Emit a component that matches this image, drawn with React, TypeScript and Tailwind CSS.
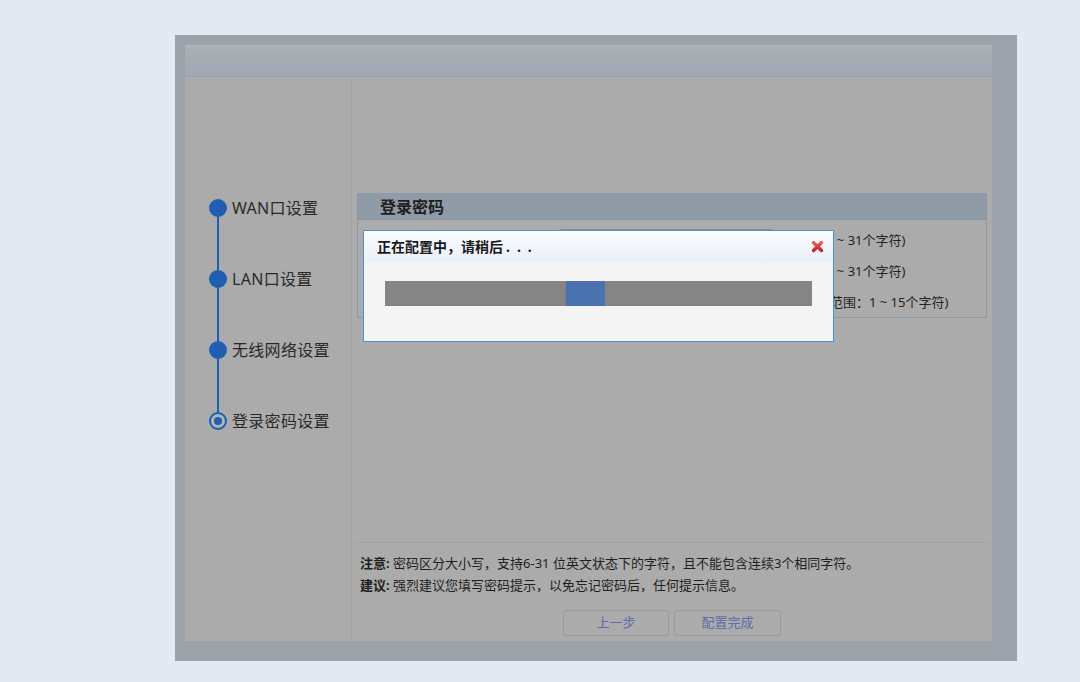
import React from "react";

const steps = ["WAN口设置", "LAN口设置", "无线网络设置", "登录密码设置"];

function CloseIcon() {
  return (
    <svg width="13" height="13" viewBox="0 0 13 13">
      <defs>
        <linearGradient id="rx" x1="0" y1="0" x2="0" y2="1">
          <stop offset="0" stopColor="#f0605a" />
          <stop offset="1" stopColor="#c8201c" />
        </linearGradient>
      </defs>
      <path d="M2.5 2.5 L10.5 10.5 M10.5 2.5 L2.5 10.5" stroke="url(#rx)" strokeWidth="3.4" strokeLinecap="round" />
    </svg>
  );
}

export default function App() {
  return (
    <div className="w-[1080px] h-[682px] bg-[#e3e9f3] pt-[35px] pl-[175px] font-['Noto_Sans','Noto_Sans_CJK_SC',sans-serif] text-[#262626]">
      <div className="w-[842px] h-[626px] bg-[#9ba2aa] pt-[10px] pl-[10px] pr-[25px] pb-[20px]">
        <div className="w-full h-full flex flex-col bg-[#ababab]">
          <div className="h-[32px] shrink-0 bg-gradient-to-b from-[#acb0b6] to-[#9fa8b3] border-t border-[#b4b8bd] border-b border-b-[#96a0ac]" />
          <div className="flex flex-1 min-h-0">
            <div className="w-[167px] shrink-0 border-r border-[#a1a4a8] relative pt-[119px]">
              <div className="absolute left-[32px] top-[131px] h-[213px] w-[2px] bg-[#1e5eb3]" />
              <div className="flex flex-col gap-[47px]">
                {steps.map((s, i) => (
                  <div key={s} className="relative h-[24px] flex items-center pl-[24px]">
                    {i < 3 ? (
                      <div className="w-[18px] h-[18px] rounded-full bg-[#1e5eb3] shrink-0" />
                    ) : (
                      <div className="w-[18px] h-[18px] rounded-full border-2 border-[#1e5eb3] bg-[#b3b3b3] shrink-0 flex items-center justify-center">
                        <div className="w-[8px] h-[8px] rounded-full bg-[#1e5eb3]" />
                      </div>
                    )}
                    <span className="ml-[5px] text-[16px] tracking-[0.3px] leading-[24px] text-[#2a2a2a]">{s}</span>
                  </div>
                ))}
              </div>
            </div>
            <div className="flex-1 flex flex-col relative">
              <div className="h-[116px] shrink-0" />
              <div className="mx-[5px] h-[125px] shrink-0 border border-[#8b99a8] flex flex-col">
                <div className="h-[26px] shrink-0 bg-[#8f9ba7] border-b border-[#8595a5] flex items-center pl-[22px]">
                  <span className="text-[16px] font-bold leading-[20px] text-[#1f1f1f]">登录密码</span>
                </div>
                <div className="flex flex-col pt-[4px]">
                  {["(长度为6\u2002~ 31个字符)", "(长度为6\u2002~ 31个字符)", "(提示信息范围：1 ~ 15个字符)"].map((t, i) => (
                    <div key={i} className="h-[31px] flex items-center">
                      <div className="w-[201px] shrink-0" />
                      <div className={`w-[215px] h-[22px] shrink-0 ${i === 0 ? "border border-[#8d8d8d] bg-[#b1b1b1] rounded-[2px]" : ""}`} />
                      <span className={`${i === 2 ? "ml-[0px]" : "ml-[6px]"} text-[13px] leading-[18px] text-[#232323] whitespace-nowrap`}>{t}</span>
                    </div>
                  ))}
                </div>
              </div>
              <div className="flex-1" />
              <div className="mx-[3px] border-t border-[#9aa3ae] pt-[9px] pb-[5px] flex flex-col">
                <div className="pl-[5px] text-[13px] leading-[22px] text-[#1f1f1f]">
                  <div><span className="font-bold">注意:</span> 密码区分大小写，支持6-31 位英文状态下的字符，且不能包含连续3个相同字符。</div>
                  <div><span className="font-bold">建议:</span> 强烈建议您填写密码提示，以免忘记密码后，任何提示信息。</div>
                </div>
                <div className="mt-[14px] flex justify-center gap-[5px]">
                  <div className="w-[106px] h-[26px] rounded-[3px] border border-[#9a9a9a] bg-[#ababab] flex items-center justify-center text-[13px] text-[#5b6ea6]">上一步</div>
                  <div className="w-[107px] h-[26px] rounded-[3px] border border-[#9a9a9a] bg-[#ababab] flex items-center justify-center text-[13px] text-[#5b6ea6]">配置完成</div>
                </div>
              </div>

              <div className="absolute left-[11px] top-[153px] w-[471px] h-[112px] border border-[#4b8fd5] bg-[#f4f4f4] flex flex-col">
                <div className="h-[31px] shrink-0 bg-gradient-to-b from-[#fbfcfe] to-[#e9f0f9] flex items-center justify-between pl-[13px] pr-[9px]">
                  <span className="text-[14px] font-bold leading-[18px] text-[#1a1a1a]">
                    正在配置中，请稍后<span className="tracking-[7px] ml-[3px]">...</span>
                  </span>
                  <CloseIcon />
                </div>
                <div className="pt-[19px] pl-[21px]">
                  <div className="relative w-[427px] h-[25px] bg-[#858585]">
                    <div className="absolute left-[181px] top-0 w-[39px] h-[25px] bg-[#4a72b0]" />
                  </div>
                </div>
              </div>
            </div>
          </div>
        </div>
      </div>
    </div>
  );
}
